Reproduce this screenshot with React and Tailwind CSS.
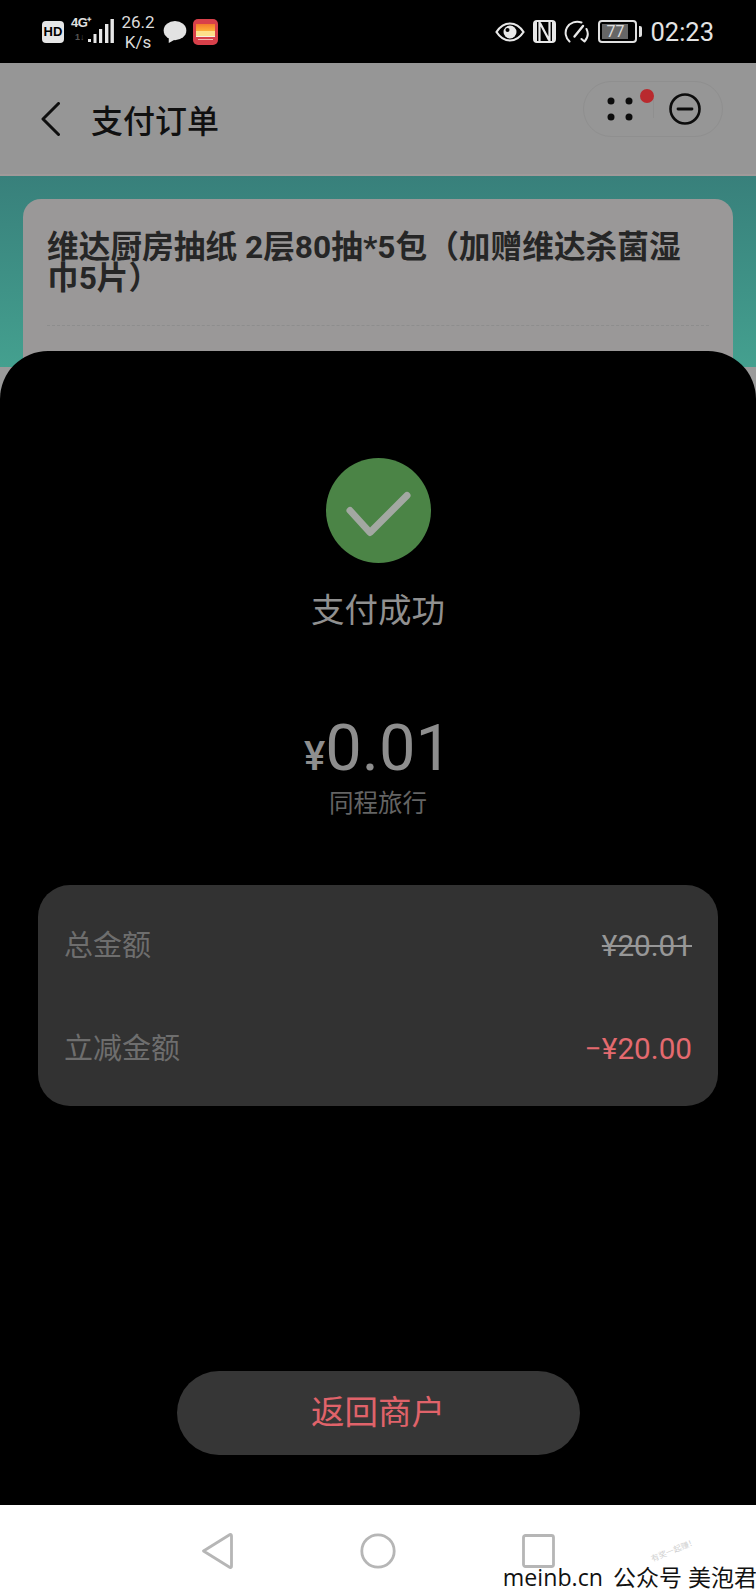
const cjk = { fontFamily: 'Roboto, "Noto Sans CJK SC", sans-serif' };

function Signal() {
  return (
    <div className="relative w-[44px] h-[26px] ml-[7px]">
      <span className="absolute left-0 top-[-3px] text-[13px] leading-[14px] font-bold text-[#e0e0e0] tracking-[-0.5px]" style={{ fontFamily: '"Liberation Sans", sans-serif' }}>4G⁺</span>
      <span className="absolute left-[4px] top-[13px] text-[9px] leading-[10px] font-bold text-[#555]" style={{ fontFamily: '"Liberation Sans", sans-serif' }}>1↓</span>
      <svg className="absolute left-0 top-0" width="44" height="26" viewBox="0 0 44 26">
        <rect x="17" y="20" width="3" height="3" fill="#e8e8e8" />
        <rect x="22.5" y="15" width="3" height="9" fill="#e8e8e8" />
        <rect x="28" y="10" width="3.2" height="14" fill="#e8e8e8" />
        <rect x="34" y="5" width="3.4" height="19" fill="#e8e8e8" />
        <rect x="39.5" y="0" width="3.4" height="24" fill="#e8e8e8" />
      </svg>
    </div>
  );
}

function Bubble() {
  return (
    <svg width="24" height="24" viewBox="0 0 25 24" className="ml-[9px]">
      <ellipse cx="12.5" cy="10.5" rx="11.8" ry="10" fill="#e2e2e2" />
      <path d="M6 17 L6 23.5 L13 19.5 Z" fill="#e2e2e2" />
    </svg>
  );
}

function AppIcon() {
  return (
    <div className="ml-[6px] w-[25px] h-[26px] rounded-[5px] bg-[#d8404a] flex flex-col items-center pt-[5px]">
      <div className="w-[19px] h-[7px] bg-linear-to-b from-[#f47a2c] to-[#fbb13a]" />
      <div className="w-[19px] h-[5px] bg-[#fde08a]" />
      <div className="w-[19px] h-[1px] bg-[#f6f0e0]" />
      <div className="mt-[2px] w-[15px] h-[1px] bg-[#f3b9b0]" />
    </div>
  );
}

function Eye() {
  return (
    <svg width="30" height="20" viewBox="0 0 30 20">
      <path d="M1.5 10 C6 3 10.500 1.500 15 1.500 C19.500 1.500 24 3 28.500 10 C24 17 19.500 18.500 15 18.500 C10.500 18.500 6 17 1.500 10 Z" fill="none" stroke="#e8e8e8" strokeWidth="2.2" />
      <circle cx="15" cy="10" r="6.500" fill="#e8e8e8" />
      <circle cx="12.500" cy="8" r="2" fill="#000" />
    </svg>
  );
}

function Nfc() {
  return (
    <svg width="23" height="23" viewBox="0 0 23 23" className="ml-[8px]">
      <rect x="0" y="0" width="23" height="23" rx="4" fill="#e8e8e8" />
      <rect x="4" y="2" width="15" height="19" fill="#000" />
      <path d="M6.500 2 V21 M16.500 2 V21 M7 3 L16 20" fill="none" stroke="#e8e8e8" strokeWidth="2.200" />
    </svg>
  );
}

function Gauge() {
  return (
    <svg width="25" height="23" viewBox="0 0 25 23" className="ml-[8px]">
      <path d="M5.500 21.500 C1.500 18 0.500 12 3 7.500 C6 2.500 12 0.500 17.500 2.500" fill="none" stroke="#e8e8e8" strokeWidth="2" strokeLinecap="round" />
      <path d="M22.500 9 C24.500 13 23.800 18 20.500 21.500 L17.500 19" fill="none" stroke="#e8e8e8" strokeWidth="2" strokeLinecap="round" strokeLinejoin="round" />
      <path d="M10.500 16.500 L19 6" fill="none" stroke="#e8e8e8" strokeWidth="2.400" strokeLinecap="round" />
    </svg>
  );
}

function Battery() {
  return (
    <div className="ml-[9px] flex items-center gap-[2px]">
      <div className="w-[39px] h-[23px] rounded-[4px] border-2 border-[#e0e0e0] p-[2px]">
        <div className="w-[26px] h-full bg-[#666] flex items-center justify-center">
          <span className="text-[16px] leading-none text-[#ddd]" style={{ fontFamily: 'Roboto, sans-serif' }}>77</span>
        </div>
      </div>
      <div className="w-[3px] h-[11px] rounded-r-[2px] bg-[#e0e0e0]" />
    </div>
  );
}

function StatusBar() {
  return (
    <div className="h-[63px] bg-black flex items-center justify-between pl-[42px] pr-[42px]">
      <div className="flex items-center">
        <div className="w-[22px] h-[22px] rounded-[4px] bg-[#e6e6e6] flex items-center justify-center text-[13px] font-bold text-black" style={{ fontFamily: '"Liberation Sans", sans-serif' }}>HD</div>
        <Signal />
        <div className="ml-[7px] w-[32px] flex flex-col items-center text-[17px] leading-[20px] text-[#dcdcdc]" style={{ fontFamily: 'Roboto, sans-serif' }}>
          <span>26.2</span>
          <span>K/s</span>
        </div>
        <Bubble />
        <AppIcon />
      </div>
      <div className="flex items-center">
        <Eye />
        <Nfc />
        <Gauge />
        <Battery />
        <span className="ml-[8px] text-[25.500px] leading-[30px] text-[#e4e4e4]" style={{ fontFamily: 'Roboto, sans-serif' }}>02:23</span>
      </div>
    </div>
  );
}

function Capsule() {
  return (
    <div className="mb-[14px] w-[140px] h-[56px] rounded-full border border-[#8f8f8f] flex items-center relative">
      <div className="w-[69px] flex justify-end pr-[20px]">
        <svg width="26" height="24" viewBox="0 0 26 24">
          <circle cx="4" cy="4" r="3.500" fill="#0c0c0c" />
          <circle cx="22" cy="4" r="3.500" fill="#0c0c0c" />
          <circle cx="4" cy="20" r="3.500" fill="#0c0c0c" />
          <circle cx="22" cy="20" r="3.500" fill="#0c0c0c" />
        </svg>
      </div>
      <div className="w-px h-[18px] bg-[#8f8f8f]" />
      <div className="ml-[15px]">
        <svg width="32" height="32" viewBox="0 0 32 32">
          <circle cx="16" cy="16" r="14.500" fill="none" stroke="#0c0c0c" strokeWidth="2.600" />
          <path d="M9 16 H23" stroke="#0c0c0c" strokeWidth="2.800" strokeLinecap="round" />
        </svg>
      </div>
      <span className="absolute left-[56px] top-[7px] w-[14px] h-[14px] rounded-full bg-[#b92a2e]" />
    </div>
  );
}

function Header() {
  return (
    <div className="h-[113px] bg-[#969696] flex items-center justify-between pl-[41px] pr-[33px] pb-[5px] border-b-2 border-[#a09a9a]">
      <div className="flex items-center">
        <svg width="19" height="34" viewBox="0 0 19 34" className="mt-[5px]">
          <path d="M17.500 1.500 L2 17 L17.500 32.500" fill="none" stroke="#0f0f0f" strokeWidth="3" strokeLinecap="round" strokeLinejoin="round" />
        </svg>
        <h1 className="ml-[31px] mt-[11px] text-[32px] leading-[40px] text-[#101010] font-medium" style={cjk}>支付订单</h1>
      </div>
      <Capsule />
    </div>
  );
}

function Backdrop() {
  return (
    <div className="flex-1 bg-[#9a9a9a]">
      <div className="h-[191px] bg-linear-to-b from-[#38807b] to-[#44a08f] pt-[23px] px-[23px] pb-0 overflow-hidden">
        <div className="h-[200px] rounded-[18px] bg-[#9a9898] pt-[33px] px-[24px]">
          <h2 className="text-[31.700px] leading-[31px] font-bold text-[#262626] w-[640px]" style={cjk}>维达厨房抽纸 2层80抽*5包（加赠维达杀菌湿巾5片）</h2>
          <div className="mt-[31px] border-t border-dashed border-[#8d8d8d]" />
        </div>
      </div>
    </div>
  );
}

function Sheet() {
  return (
    <div className="absolute inset-x-0 top-[288px] bottom-0 bg-black rounded-t-[48px] flex flex-col items-center pt-[107px]" style={cjk}>
      <div className="w-[105px] h-[105px] rounded-full bg-[#4b8446] flex items-center justify-center">
        <svg width="68" height="50" viewBox="0 0 68 50" className="overflow-visible">
          <path d="M6 24.500 L26 46.500 L63 9.500" fill="none" stroke="#a3a8a2" strokeWidth="7" strokeLinecap="round" strokeLinejoin="round" />
        </svg>
      </div>
      <div className="mt-[26px] text-[33.500px] leading-[44px] text-[#909090]">支付成功</div>
      <div className="mt-[73px] flex items-baseline text-[#8e8e8e] leading-[84px]">
        <span className="text-[40px] font-medium">¥</span>
        <span className="text-[65px]">0.01</span>
      </div>
      <div className="mt-[-12px] text-[24.500px] leading-[34px] text-[#646464]">同程旅行</div>
      <div className="mt-[64px] w-[680px] h-[221px] rounded-[32px] bg-[#323232] px-[26px] pt-[39px] text-[29px] leading-[44px]">
        <div className="flex justify-between">
          <span className="text-[#6e6e6e]">总金额</span>
          <span className="text-[#979797] line-through text-[29.700px]">¥20.01</span>
        </div>
        <div className="mt-[59px] flex justify-between">
          <span className="text-[#6e6e6e]">立减金额</span>
          <span className="text-[#e46a6f] text-[29.700px]">−¥20.00</span>
        </div>
      </div>
      <button className="mt-[265px] w-[403px] h-[84px] rounded-full bg-[#363636] text-[33.500px] leading-[44px] text-[#e0636a]">返回商户</button>
    </div>
  );
}

function NavBar() {
  return (
    <div className="h-[91px] bg-white relative flex items-start pt-[27px] pl-[201px]">
      <svg width="32" height="38" viewBox="0 0 32 38">
        <path d="M29 2.500 L2.500 19 L29 35.500 Q30.500 36 30.500 34 V4 Q30.500 2 29 2.500 Z" fill="none" stroke="#b6b6b6" strokeWidth="2.800" strokeLinejoin="round" />
      </svg>
      <svg width="36" height="38" viewBox="0 0 36 38" className="ml-[127px]">
        <circle cx="18" cy="19" r="16.200" fill="none" stroke="#b6b6b6" strokeWidth="2.800" />
      </svg>
      <svg width="33" height="34" viewBox="0 0 33 34" className="ml-[126px] mt-[2px]">
        <rect x="1.500" y="1.500" width="30" height="31" rx="2" fill="none" stroke="#b6b6b6" strokeWidth="2.800" />
      </svg>
      <div className="absolute right-[-1px] bottom-[5px] flex items-baseline text-[23.200px] leading-[28px] text-[#111]" style={{ fontFamily: '"Open Sans", "Noto Sans CJK SC", sans-serif' }}>
        <span>meinb.cn</span>
        <span className="ml-[10px] text-[23px]">公众号 美泡君</span>
      </div>
      <span className="absolute left-[650px] top-[41px] -rotate-[22deg] text-[8px] leading-[10px] text-[#d0d0d0]" style={cjk}>有奖一起赚！</span>
    </div>
  );
}

export default function App() {
  return (
    <div className="w-[756px] h-[1596px] flex flex-col overflow-hidden bg-black">
      <StatusBar />
      <div className="relative flex-1 flex flex-col">
        <Header />
        <Backdrop />
        <Sheet />
      </div>
      <NavBar />
    </div>
  );
}
